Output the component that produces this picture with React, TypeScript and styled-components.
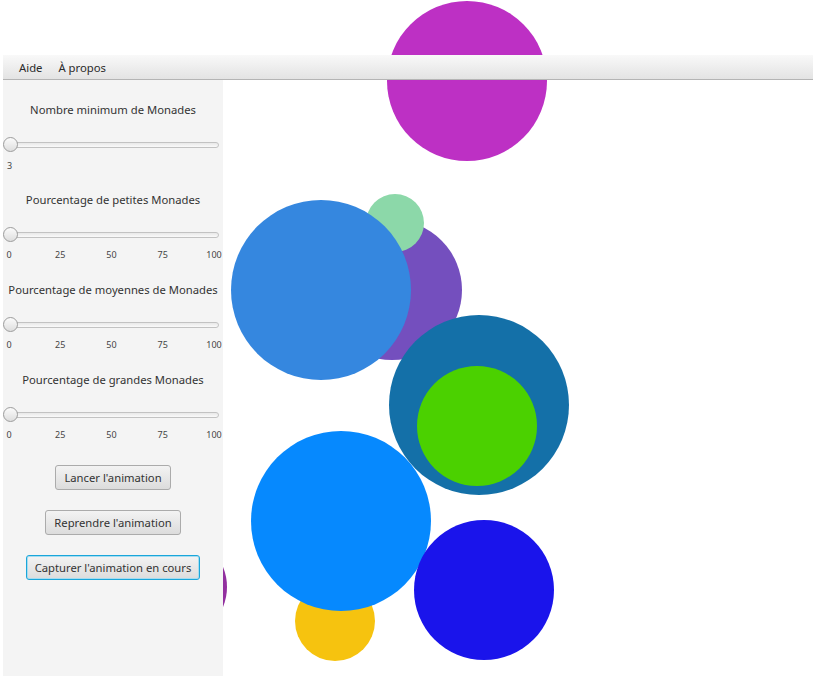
import React from "react";
import styled, { createGlobalStyle } from "styled-components";

const Global = createGlobalStyle`
  html, body { margin: 0; padding: 0; background: #ffffff; }
  body { font-family: "Noto Sans", "Open Sans", sans-serif; overflow: hidden; }
  * { box-sizing: border-box; }
`;

const Page = styled.div`
  width: 813px;
  height: 676px;
  padding-top: 55px;
  padding-left: 3px;
  background: #ffffff;
  display: flex;
  flex-direction: column;
`;

const Window = styled.div`
  flex: 1;
  display: flex;
  flex-direction: column;
`;

const MenuBar = styled.div`
  position: relative;
  z-index: 2;
  height: 25px;
  display: flex;
  align-items: center;
  padding-left: 8px;
  padding-top: 2px;
  background: linear-gradient(#f9f9f9, #e3e3e3);
  border-bottom: 1px solid #b4b4b4;
`;

const MenuItem = styled.span`
  font-size: 11.3px;
  color: #2a2a2a;
  padding: 0 8px;
  line-height: 22px;
`;

const Body = styled.div`
  flex: 1;
  display: flex;
`;

const Panel = styled.div`
  position: relative;
  z-index: 1;
  width: 220px;
  background: #f4f4f4;
  display: flex;
  flex-direction: column;
  padding-top: 21px;
  overflow: hidden;
`;

const Section = styled.div`
  height: 90px;
  display: flex;
  flex-direction: column;
`;

const Label = styled.div`
  font-size: 11.25px;
  color: #333333;
  text-align: center;
  line-height: 18px;
  white-space: nowrap;
`;

const SliderRow = styled.div`
  position: relative;
  height: 16px;
  margin-top: 18px;
  width: 217px;
`;

const Track = styled.div`
  position: absolute;
  left: 2px;
  right: 1px;
  top: 5px;
  height: 6px;
  border-radius: 3px;
  border: 1px solid #c2c2c2;
  background: linear-gradient(#e8e8e8, #fafafa);
`;

const Thumb = styled.div`
  position: absolute;
  left: 0;
  top: 0;
  width: 15px;
  height: 15px;
  border-radius: 50%;
  border: 1px solid #9c9c9c;
  background: linear-gradient(#fbfbfb, #dedede);
`;

const Ticks = styled.div`
  display: flex;
  justify-content: space-between;
  font-size: 9px;
  color: #444444;
  line-height: 12px;
  margin-top: 6px;
  padding: 0 9px 0 6px;
`;

const Tick = styled.span`
  width: 0;
  display: flex;
  justify-content: center;
  white-space: nowrap;
`;

const Value = styled.div`
  font-size: 9px;
  color: #444444;
  line-height: 12px;
  margin-top: 7px;
  padding-left: 4px;
`;

const Buttons = styled.div`
  display: flex;
  flex-direction: column;
  align-items: center;
  gap: 20px;
  margin-top: 4px;
`;

const Button = styled.button<{ $focused?: boolean }>`
  font-family: inherit;
  font-size: 11.25px;
  color: #333333;
  height: 25px;
  padding: 0 8px;
  border-radius: 3px;
  border: 1px solid ${(p) => (p.$focused ? "#1aa6da" : "#ababab")};
  box-shadow: ${(p) => (p.$focused ? "inset 0 0 0 1px #a6dcf0" : "none")};
  background: linear-gradient(#f3f3f3, #dcdcdc);
  line-height: 22px;
  cursor: default;
`;

const Canvas = styled.div`
  position: relative;
  z-index: 0;
  flex: 1;
  background: #ffffff;
`;

const Dot = styled.div<{ $x: number; $y: number; $r: number; $c: string }>`
  position: absolute;
  left: ${(p) => p.$x - p.$r}px;
  top: ${(p) => p.$y - p.$r}px;
  width: ${(p) => p.$r * 2}px;
  height: ${(p) => p.$r * 2}px;
  border-radius: 50%;
  background: ${(p) => p.$c};
`;

const monades = [
  { x: 244, y: 1, r: 80, c: "#bd30c4" },
  { x: -48, y: 507, r: 52, c: "#92309f" },
  { x: 169, y: 210, r: 70, c: "#744fbe" },
  { x: 172, y: 143, r: 29, c: "#8cd8a9" },
  { x: 97.5, y: 210, r: 90, c: "#3587df" },
  { x: 256, y: 325, r: 90, c: "#1470a8" },
  { x: 254, y: 346, r: 60, c: "#4bd100" },
  { x: 112, y: 541, r: 40, c: "#f6c30f" },
  { x: 118, y: 441, r: 90, c: "#0689fe" },
  { x: 261, y: 510, r: 70, c: "#1a14eb" },
];

const ticks = ["0", "25", "50", "75", "100"];

function Slider() {
  return (
    <SliderRow>
      <Track />
      <Thumb />
    </SliderRow>
  );
}

export default function App() {
  return (
    <>
      <Global />
      <Page>
        <Window>
          <MenuBar>
            <MenuItem>Aide</MenuItem>
            <MenuItem>À propos</MenuItem>
          </MenuBar>
          <Body>
            <Panel>
              <Section>
                <Label>Nombre minimum de Monades</Label>
                <Slider />
                <Value>3</Value>
              </Section>
              {["Pourcentage de petites Monades", "Pourcentage de moyennes de Monades", "Pourcentage de grandes Monades"].map((t) => (
                <Section key={t}>
                  <Label>{t}</Label>
                  <Slider />
                  <Ticks>
                    {ticks.map((k) => (
                      <Tick key={k}>{k}</Tick>
                    ))}
                  </Ticks>
                </Section>
              ))}
              <Buttons>
                <Button>Lancer l'animation</Button>
                <Button>Reprendre l'animation</Button>
                <Button $focused>Capturer l'animation en cours</Button>
              </Buttons>
            </Panel>
            <Canvas>
              {monades.map((m, i) => (
                <Dot key={i} $x={m.x} $y={m.y} $r={m.r} $c={m.c} />
              ))}
            </Canvas>
          </Body>
        </Window>
      </Page>
    </>
  );
}
